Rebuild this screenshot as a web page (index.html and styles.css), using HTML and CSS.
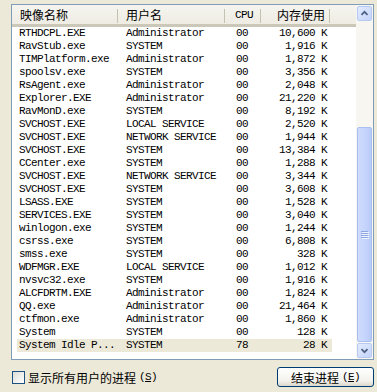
FILE: index.html
```html
<html>

<head>
	<meta charset="utf-8">
	<link rel="stylesheet" href="styles.css">
</head>

<body>
	<div id="wrapper">
		<div class="list_box">
			<div class="list_view">
				<div class="list_head">
					<div class="head_cell">映像名称</div>
					<div class="head_cell">用户名</div>
					<div class="head_cell mono cpu_head">CPU</div>
					<div class="head_cell mem_head">内存使用</div>
					<div class="head_cell no_line"></div>
				</div>
				<div class="list_rows">
					<div class="row"><span>RTHDCPL.EXE</span><span>Administrator</span><span>00</span><span class="mem">10,600 K</span></div>
					<div class="row"><span>RavStub.exe</span><span>SYSTEM</span><span>00</span><span class="mem">1,916 K</span></div>
					<div class="row"><span>TIMPlatform.exe</span><span>Administrator</span><span>00</span><span class="mem">1,872 K</span></div>
					<div class="row"><span>spoolsv.exe</span><span>SYSTEM</span><span>00</span><span class="mem">3,356 K</span></div>
					<div class="row"><span>RsAgent.exe</span><span>Administrator</span><span>00</span><span class="mem">2,048 K</span></div>
					<div class="row"><span>Explorer.EXE</span><span>Administrator</span><span>00</span><span class="mem">21,220 K</span></div>
					<div class="row"><span>RavMonD.exe</span><span>SYSTEM</span><span>00</span><span class="mem">8,192 K</span></div>
					<div class="row"><span>SVCHOST.EXE</span><span>LOCAL SERVICE</span><span>00</span><span class="mem">2,520 K</span></div>
					<div class="row"><span>SVCHOST.EXE</span><span>NETWORK SERVICE</span><span>00</span><span class="mem">1,944 K</span></div>
					<div class="row"><span>SVCHOST.EXE</span><span>SYSTEM</span><span>00</span><span class="mem">13,384 K</span></div>
					<div class="row"><span>CCenter.exe</span><span>SYSTEM</span><span>00</span><span class="mem">1,288 K</span></div>
					<div class="row"><span>SVCHOST.EXE</span><span>NETWORK SERVICE</span><span>00</span><span class="mem">3,344 K</span></div>
					<div class="row"><span>SVCHOST.EXE</span><span>SYSTEM</span><span>00</span><span class="mem">3,608 K</span></div>
					<div class="row"><span>LSASS.EXE</span><span>SYSTEM</span><span>00</span><span class="mem">1,528 K</span></div>
					<div class="row"><span>SERVICES.EXE</span><span>SYSTEM</span><span>00</span><span class="mem">3,040 K</span></div>
					<div class="row"><span>winlogon.exe</span><span>SYSTEM</span><span>00</span><span class="mem">1,244 K</span></div>
					<div class="row"><span>csrss.exe</span><span>SYSTEM</span><span>00</span><span class="mem">6,808 K</span></div>
					<div class="row"><span>smss.exe</span><span>SYSTEM</span><span>00</span><span class="mem">328 K</span></div>
					<div class="row"><span>WDFMGR.EXE</span><span>LOCAL SERVICE</span><span>00</span><span class="mem">1,012 K</span></div>
					<div class="row"><span>nvsvc32.exe</span><span>SYSTEM</span><span>00</span><span class="mem">1,916 K</span></div>
					<div class="row"><span>ALCFDRTM.EXE</span><span>Administrator</span><span>00</span><span class="mem">1,824 K</span></div>
					<div class="row"><span>QQ.exe</span><span>Administrator</span><span>00</span><span class="mem">21,464 K</span></div>
					<div class="row"><span>ctfmon.exe</span><span>Administrator</span><span>00</span><span class="mem">1,860 K</span></div>
					<div class="row"><span>System</span><span>SYSTEM</span><span>00</span><span class="mem">128 K</span></div>
					<div class="row selected"><span>System Idle P...</span><span>SYSTEM</span><span>78</span><span class="mem">28 K</span></div>
				</div>
			</div>
			<div class="scroll_bar">
				<div class="scroll_btn">
					<svg width="15" height="15" viewBox="0 0 15 15"><polyline points="4,9 7.5,5.5 11,9" fill="none" stroke="#4D6185" stroke-width="2"/></svg>
				</div>
				<div class="scroll_track">
					<div class="scroll_thumb">
						<svg width="8" height="8" viewBox="0 0 8 8">
							<path d="M0 0.5H7M0 2.5H7M0 4.5H7M0 6.5H7" stroke="#8EA6E4" stroke-width="1"/>
							<path d="M1 1.5H8M1 3.5H8M1 5.5H8M1 7.5H8" stroke="#EEF4FE" stroke-width="1"/>
						</svg>
					</div>
				</div>
				<div class="scroll_btn">
					<svg width="15" height="15" viewBox="0 0 15 15"><polyline points="4,6 7.5,9.5 11,6" fill="none" stroke="#4D6185" stroke-width="2"/></svg>
				</div>
			</div>
		</div>
		<div class="bottom_bar">
			<label class="check_label"><span class="check_box"></span><span>显示所有用户的进程</span><span class="mono">(<u>S</u>)</span></label>
			<div class="end_btn"><span>结束进程</span><span class="mono">(<u>E</u>)</span></div>
		</div>
	</div>
</body>
</html>
```

FILE: styles.css
```css
* {
	margin: 0;
	padding: 0;
	box-sizing: border-box;
}

body {
	background: #ECE9D8;
	font-family: "Noto Sans CJK SC", sans-serif;
	font-size: 12px;
	color: #000;
}

.mono {
	font-family: "Liberation Mono", "Noto Sans CJK SC", monospace;
	font-size: 11px;
	letter-spacing: -0.6px;
}

#wrapper {
	width: 377px;
	height: 392px;
	padding: 4px 3px 0 11px;
}

.list_box {
	display: flex;
	height: 356px;
	border: 1px solid #7F9DB9;
	background: #FFF;
}

.list_view {
	flex: 1;
	overflow: hidden;
}

.list_head {
	display: grid;
	grid-template-columns: 106px 107px 36px 69px 1fr;
	height: 22px;
	background: linear-gradient(#F5F4EF, #EEECE3);
	border-bottom: 3px solid;
	border-image: linear-gradient(#E2DECD, #D6D2C2, #CBC7B8) 1;
}

.head_cell {
	display: flex;
	align-items: center;
	padding-left: 8px;
	white-space: nowrap;
	background: linear-gradient(#C5C2B2, #C5C2B2) right 4px / 1px 14px no-repeat;
}

.head_cell.no_line {
	background: none;
}

.cpu_head {
	padding-left: 10px;
}

.mem_head {
	justify-content: flex-end;
	padding-right: 5px;
}

.row {
	display: grid;
	grid-template-columns: 101px 107px 36px 71px;
	height: 13px;
	margin-left: 5px;
	width: 315px;
	line-height: 13px;
	font-family: "Liberation Mono", monospace;
	font-size: 11px;
	letter-spacing: -0.6px;
	white-space: nowrap;
}

.row span {
	overflow: hidden;
	padding-left: 2px;
}

.row span:nth-child(2) {
	padding-left: 8px;
}

.row span:nth-child(3) {
	padding-left: 11px;
}

.row .mem {
	text-align: right;
	padding-right: 5px;
}

.row.selected {
	background: #ECE9D8;
}

.scroll_bar {
	width: 17px;
	display: flex;
	flex-direction: column;
	background: #F7F6F1;
}

.scroll_btn {
	height: 17px;
	padding: 1px;
}

.scroll_btn svg {
	display: block;
	border: 1px solid #B7C9F3;
	border-radius: 2px;
	background: linear-gradient(135deg, #E3EBFE, #C3D4FB);
}

.scroll_track {
	flex: 1;
	display: flex;
	flex-direction: column;
	padding: 105px 1px 0 1px;
}

.scroll_thumb {
	flex: 1;
	display: flex;
	align-items: center;
	justify-content: center;
	border: 1px solid #A9BFF1;
	border-radius: 2px;
	background: linear-gradient(90deg, #D0DCFC, #C6D5FC 50%, #B9CBF8);
}

.bottom_bar {
	display: flex;
	justify-content: space-between;
	align-items: center;
	height: 32px;
	padding-top: 2px;
}

.check_label {
	display: flex;
	align-items: center;
	padding-left: 1px;
}

.check_box {
	width: 13px;
	height: 13px;
	margin-right: 3px;
	border: 1px solid #1C5180;
	background: linear-gradient(135deg, #DCDCD7, #FFFFFF);
}

.check_label .mono,
.end_btn .mono {
	margin-left: 3px;
}

.end_btn {
	display: flex;
	align-items: center;
	justify-content: center;
	width: 97px;
	height: 20px;
	border: 1px solid #003C74;
	border-radius: 3px;
	background: linear-gradient(#FFFFFF, #F3F2EC 70%, #DCD8CC);
}
```
